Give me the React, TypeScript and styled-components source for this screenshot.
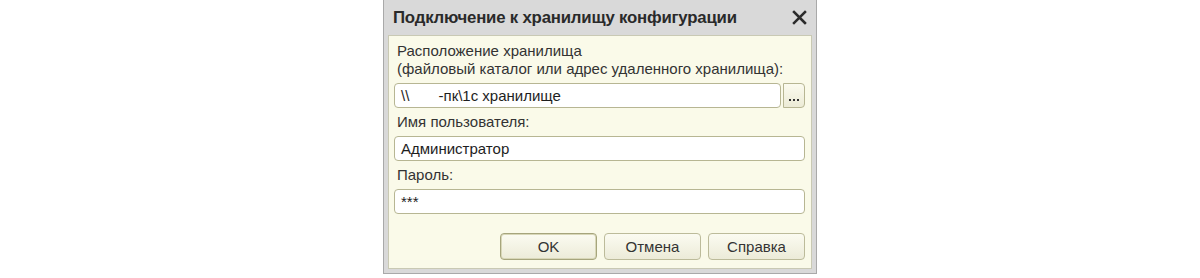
import React from 'react';
import styled, { createGlobalStyle } from 'styled-components';

const GlobalStyle = createGlobalStyle`
  html, body {
    margin: 0;
    padding: 0;
    background: #ffffff;
  }
  body {
    font-family: "Liberation Sans", Arial, sans-serif;
  }
`;

const Page = styled.div`
  width: 1200px;
  height: 278px;
  display: flex;
  justify-content: center;
  align-items: flex-start;
`;

const Window = styled.div`
  width: 434px;
  height: 274px;
  background: #d9d9d9;
  border: 1px solid #a9a9a9;
  border-top: none;
  box-sizing: border-box;
  display: flex;
  flex-direction: column;
  padding: 0 4px 4px 4px;
`;

const TitleBar = styled.div`
  height: 35px;
  display: flex;
  align-items: center;
  justify-content: space-between;
  padding: 0 5px 0 5px;
  flex-shrink: 0;
`;

const Title = styled.div`
  font-weight: bold;
  font-size: 16.8px;
  color: #2a2a2a;
  letter-spacing: -0.2px;
`;

const CloseIcon = styled.svg`
  width: 15px;
  height: 15px;
`;

const Body = styled.div`
  flex: 1;
  background: #fafae9;
  border: 1px solid #c9c9b4;
  display: flex;
  flex-direction: column;
  padding: 1px 6px 8px 5px;
`;

const Label = styled.div`
  font-size: 15px;
  line-height: 18px;
  color: #333;
  padding-left: 3px;
  margin-top: 5px;
  margin-bottom: 5px;
`;

const FieldRow = styled.div`
  display: flex;
  gap: 2px;
`;

const Input = styled.div`
  flex: 1;
  height: 25px;
  box-sizing: border-box;
  border: 1px solid #b7b693;
  border-radius: 4px;
  background: #ffffff;
  font-size: 15px;
  color: #1e1e1e;
  display: flex;
  align-items: center;
  padding-left: 6px;
  white-space: pre;
`;

const PickButton = styled.div`
  width: 22px;
  height: 25px;
  box-sizing: border-box;
  border: 1px solid #b7b693;
  border-radius: 0 4px 4px 0;
  background: linear-gradient(#fbfbef, #ecebd6);
  display: flex;
  align-items: flex-end;
  justify-content: center;
  padding-bottom: 6px;
  gap: 2px;
`;

const Dot = styled.span`
  width: 2px;
  height: 2px;
  background: #333;
`;

const Buttons = styled.div`
  margin-top: auto;
  display: flex;
  justify-content: flex-end;
  gap: 7px;
`;

const Button = styled.div<{ $default?: boolean }>`
  width: 97px;
  height: 27px;
  box-sizing: border-box;
  border: 1px solid ${p => (p.$default ? '#a6a57c' : '#bcbb9a')};
  box-shadow: ${p => (p.$default ? 'inset 0 0 0 1px #d8d7b8' : 'none')};
  border-radius: 4px;
  background: linear-gradient(#fbfbf1, #ecebd8);
  display: flex;
  align-items: center;
  justify-content: center;
  font-size: 15px;
  color: #333;
`;

export default function App() {
  return (
    <>
      <GlobalStyle />
      <Page>
        <Window>
          <TitleBar>
            <Title>Подключение к хранилищу конфигурации</Title>
            <CloseIcon viewBox="0 0 15 15">
              <path d="M2 2 L13 13 M13 2 L2 13" stroke="#2b2b2b" strokeWidth="2.5" strokeLinecap="square" />
            </CloseIcon>
          </TitleBar>
          <Body>
            <Label>
              Расположение хранилища
              <br />
              (файловый каталог или адрес удаленного хранилища):
            </Label>
            <FieldRow>
              <Input>{'\\\\       -пк\\1с хранилище'}</Input>
              <PickButton>
                <Dot />
                <Dot />
                <Dot />
              </PickButton>
            </FieldRow>
            <Label>Имя пользователя:</Label>
            <FieldRow>
              <Input>Администратор</Input>
            </FieldRow>
            <Label>Пароль:</Label>
            <FieldRow>
              <Input>***</Input>
            </FieldRow>
            <Buttons>
              <Button $default>OK</Button>
              <Button>Отмена</Button>
              <Button>Справка</Button>
            </Buttons>
          </Body>
        </Window>
      </Page>
    </>
  );
}
